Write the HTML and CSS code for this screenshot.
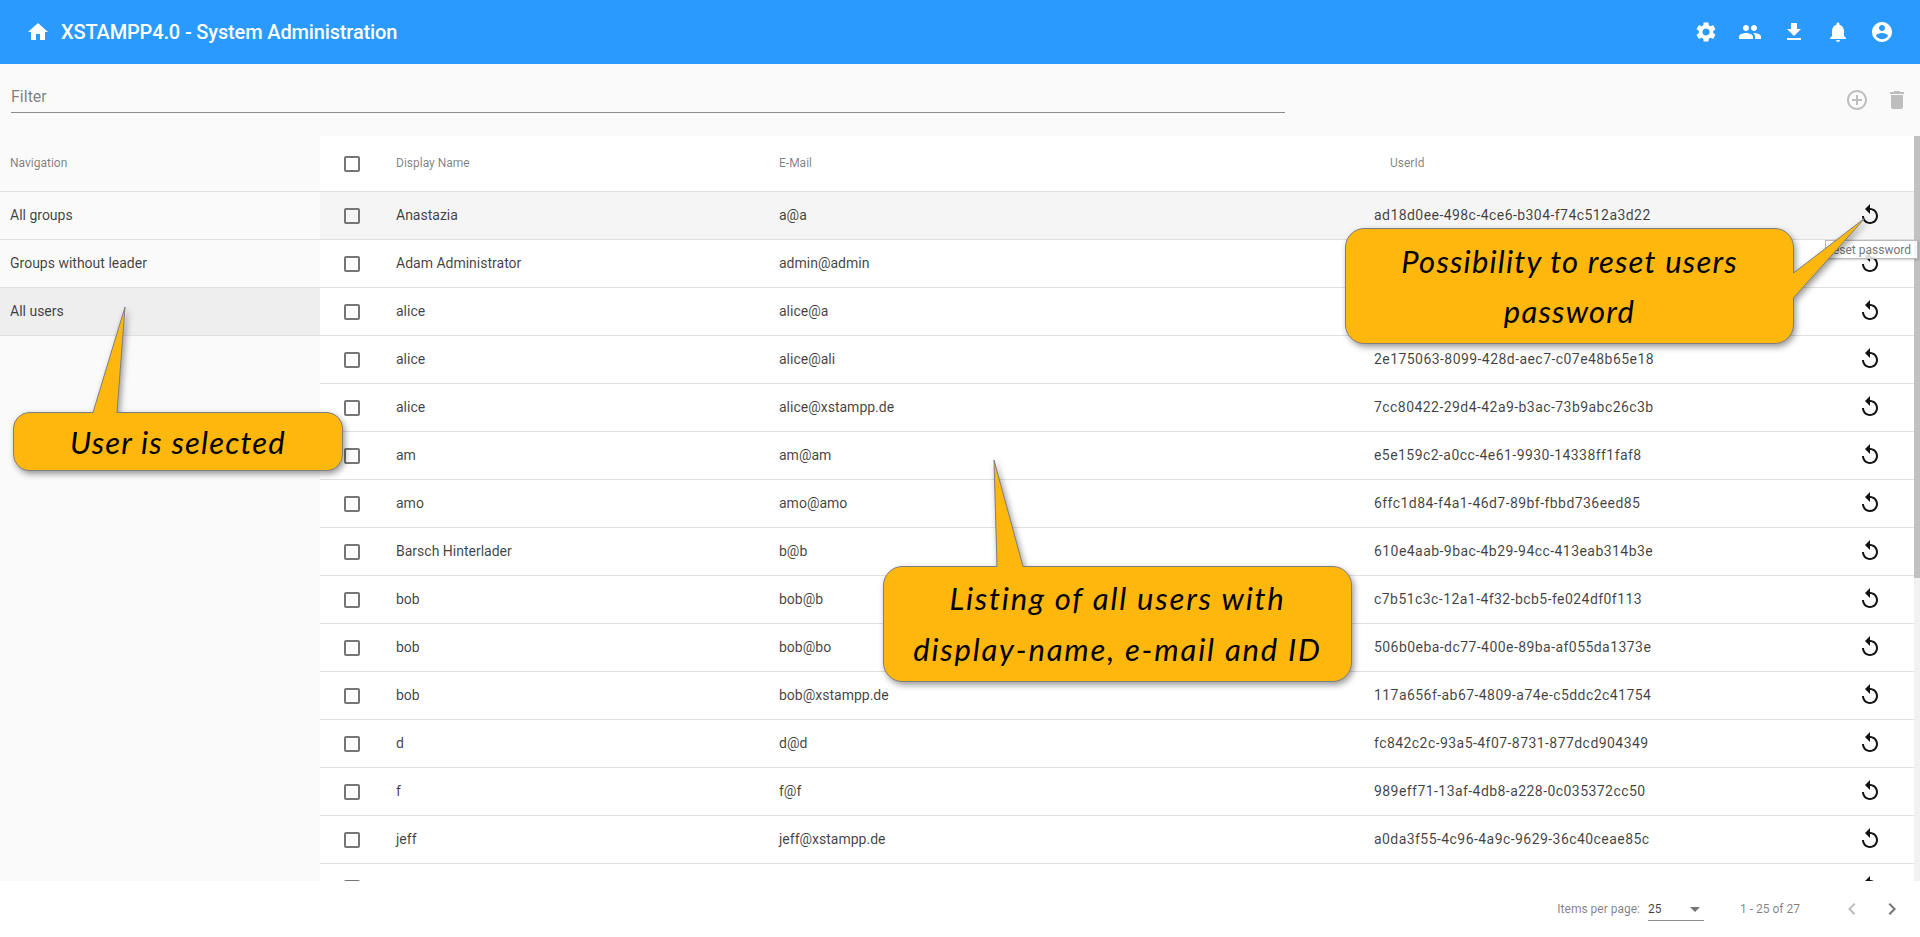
FILE: index.html
```html
<!DOCTYPE html>
<html lang="en">
<head>
    <meta charset="UTF-8">
    <meta name="viewport" content="width=device-width, initial-scale=1.0">
    <title>XSTAMPP4.0 - System Administration</title>
    <link rel="stylesheet" href="styles.css">
</head>
<body>
    <svg class="icon-defs" xmlns="http://www.w3.org/2000/svg">
        <symbol id="i-replay" viewBox="0 0 24 24"><path d="M12 5V1L7 6l5 5V7c3.31 0 6 2.69 6 6s-2.69 6-6 6-6-2.69-6-6H4c0 4.42 3.58 8 8 8s8-3.58 8-8-3.58-8-8-8z"/></symbol>
    </svg>

    <header class="toolbar">
        <svg class="icon" viewBox="0 0 24 24"><path d="M10 20v-6h4v6h5v-8h3L12 3 2 12h3v8z"/></svg>
        <span class="toolbar-title">XSTAMPP4.0 - System Administration</span>
        <div class="toolbar-icons">
            <svg class="icon" viewBox="0 0 24 24"><path d="M19.14 12.94c.04-.3.06-.61.06-.94 0-.32-.02-.64-.07-.94l2.03-1.58c.18-.14.23-.41.12-.61l-1.92-3.32c-.12-.22-.37-.29-.59-.22l-2.39.96c-.5-.38-1.03-.7-1.62-.94l-.36-2.54c-.04-.24-.24-.41-.48-.41h-3.84c-.24 0-.43.17-.47.41l-.36 2.54c-.59.24-1.13.57-1.62.94l-2.39-.96c-.22-.08-.47 0-.59.22L2.74 8.87c-.12.21-.08.47.12.61l2.03 1.58c-.05.3-.09.63-.09.94s.02.64.07.94l-2.03 1.58c-.18.14-.23.41-.12.61l1.92 3.32c.12.22.37.29.59.22l2.39-.96c.5.38 1.03.7 1.62.94l.36 2.54c.05.24.24.41.48.41h3.84c.24 0 .44-.17.47-.41l.36-2.54c.59-.24 1.13-.56 1.62-.94l2.39.96c.22.08.47 0 .59-.22l1.92-3.32c.12-.22.07-.47-.12-.61l-2.01-1.58zM12 15.6c-1.98 0-3.6-1.62-3.6-3.6s1.62-3.6 3.6-3.6 3.6 1.62 3.6 3.6-1.62 3.6-3.6 3.6z"/></svg>
            <svg class="icon" viewBox="0 0 24 24"><path d="M16 11c1.66 0 2.99-1.34 2.99-3S17.66 5 16 5c-1.66 0-3 1.34-3 3s1.34 3 3 3zm-8 0c1.66 0 2.99-1.34 2.99-3S9.66 5 8 5C6.34 5 5 6.34 5 8s1.34 3 3 3zm0 2c-2.33 0-7 1.17-7 3.5V19h14v-2.5c0-2.33-4.67-3.5-7-3.5zm8 0c-.29 0-.62.02-.97.05 1.16.84 1.97 1.97 1.97 3.45V19h6v-2.5c0-2.33-4.67-3.5-7-3.5z"/></svg>
            <svg class="icon" viewBox="0 0 24 24"><path d="M19 9h-4V3H9v6H5l7 7 7-7zM5 18v2h14v-2H5z"/></svg>
            <svg class="icon" viewBox="0 0 24 24"><path d="M12 22c1.1 0 2-.9 2-2h-4c0 1.1.89 2 2 2zm6-6v-5c0-3.07-1.64-5.64-4.5-6.32V4c0-.83-.67-1.5-1.5-1.5s-1.5.67-1.5 1.5v.68C7.63 5.36 6 7.92 6 11v5l-2 2v1h16v-1l-2-2z"/></svg>
            <svg class="icon" viewBox="0 0 24 24"><path d="M12 2C6.48 2 2 6.48 2 12s4.48 10 10 10 10-4.48 10-10S17.52 2 12 2zm0 3c1.66 0 3 1.34 3 3s-1.34 3-3 3-3-1.34-3-3 1.34-3 3-3zm0 14.2c-2.5 0-4.71-1.28-6-3.22.03-1.99 4-3.08 6-3.08 1.99 0 5.97 1.09 6 3.08-1.29 1.94-3.5 3.22-6 3.22z"/></svg>
        </div>
    </header>

    <div class="filter-bar">
        <input class="filter-input" type="text" placeholder="Filter">
        <div class="filter-actions">
            <svg class="icon" viewBox="0 0 24 24"><path d="M13 7h-2v4H7v2h4v4h2v-4h4v-2h-4V7zm-1-5C6.48 2 2 6.48 2 12s4.48 10 10 10 10-4.48 10-10S17.52 2 12 2zm0 18c-4.41 0-8-3.59-8-8s3.59-8 8-8 8 3.59 8 8-3.59 8-8 8z"/></svg>
            <svg class="icon" viewBox="0 0 24 24"><path d="M6 19c0 1.1.9 2 2 2h8c1.1 0 2-.9 2-2V7H6v12zM19 4h-3.5l-1-1h-5l-1 1H5v2h14V4z"/></svg>
        </div>
    </div>

    <main class="main">
        <nav class="sidebar">
            <div class="nav-head">Navigation</div>
            <a class="nav-item" href="#">All groups</a>
            <a class="nav-item" href="#">Groups without leader</a>
            <a class="nav-item selected" href="#">All users</a>
        </nav>

        <section class="user-list">
            <div class="row head">
                <span class="box"></span>
                <span>Display Name</span>
                <span>E-Mail</span>
                <span class="uid-head">UserId</span>
            </div>
            <div class="row hover">
                <span class="box"></span><span>Anastazia</span><span>a@a</span><span class="uid">ad18d0ee-498c-4ce6-b304-f74c512a3d22</span>
                <svg class="icon reset"><use href="#i-replay"/></svg>
            </div>
            <div class="row">
                <span class="box"></span><span>Adam Administrator</span><span>admin@admin</span><span class="uid"></span>
                <svg class="icon reset"><use href="#i-replay"/></svg>
            </div>
            <div class="row">
                <span class="box"></span><span>alice</span><span>alice@a</span><span class="uid"></span>
                <svg class="icon reset"><use href="#i-replay"/></svg>
            </div>
            <div class="row">
                <span class="box"></span><span>alice</span><span>alice@ali</span><span class="uid">2e175063-8099-428d-aec7-c07e48b65e18</span>
                <svg class="icon reset"><use href="#i-replay"/></svg>
            </div>
            <div class="row">
                <span class="box"></span><span>alice</span><span>alice@xstampp.de</span><span class="uid">7cc80422-29d4-42a9-b3ac-73b9abc26c3b</span>
                <svg class="icon reset"><use href="#i-replay"/></svg>
            </div>
            <div class="row">
                <span class="box"></span><span>am</span><span>am@am</span><span class="uid">e5e159c2-a0cc-4e61-9930-14338ff1faf8</span>
                <svg class="icon reset"><use href="#i-replay"/></svg>
            </div>
            <div class="row">
                <span class="box"></span><span>amo</span><span>amo@amo</span><span class="uid">6ffc1d84-f4a1-46d7-89bf-fbbd736eed85</span>
                <svg class="icon reset"><use href="#i-replay"/></svg>
            </div>
            <div class="row">
                <span class="box"></span><span>Barsch Hinterlader</span><span>b@b</span><span class="uid">610e4aab-9bac-4b29-94cc-413eab314b3e</span>
                <svg class="icon reset"><use href="#i-replay"/></svg>
            </div>
            <div class="row">
                <span class="box"></span><span>bob</span><span>bob@b</span><span class="uid">c7b51c3c-12a1-4f32-bcb5-fe024df0f113</span>
                <svg class="icon reset"><use href="#i-replay"/></svg>
            </div>
            <div class="row">
                <span class="box"></span><span>bob</span><span>bob@bo</span><span class="uid">506b0eba-dc77-400e-89ba-af055da1373e</span>
                <svg class="icon reset"><use href="#i-replay"/></svg>
            </div>
            <div class="row">
                <span class="box"></span><span>bob</span><span>bob@xstampp.de</span><span class="uid">117a656f-ab67-4809-a74e-c5ddc2c41754</span>
                <svg class="icon reset"><use href="#i-replay"/></svg>
            </div>
            <div class="row">
                <span class="box"></span><span>d</span><span>d@d</span><span class="uid">fc842c2c-93a5-4f07-8731-877dcd904349</span>
                <svg class="icon reset"><use href="#i-replay"/></svg>
            </div>
            <div class="row">
                <span class="box"></span><span>f</span><span>f@f</span><span class="uid">989eff71-13af-4db8-a228-0c035372cc50</span>
                <svg class="icon reset"><use href="#i-replay"/></svg>
            </div>
            <div class="row">
                <span class="box"></span><span>jeff</span><span>jeff@xstampp.de</span><span class="uid">a0da3f55-4c96-4a9c-9629-36c40ceae85c</span>
                <svg class="icon reset"><use href="#i-replay"/></svg>
            </div>
            <div class="row">
                <span class="box"></span><span></span><span></span><span></span>
                <svg class="icon reset"><use href="#i-replay"/></svg>
            </div>
        </section>

        <div class="scrollbar"><div class="scrollbar-thumb"></div></div>
    </main>

    <footer class="paginator">
        <span>Items per page:</span>
        <div class="page-select"><span class="page-value">25</span><span class="page-arrow"></span></div>
        <span class="page-range">1 - 25 of 27</span>
        <svg class="icon page-prev" viewBox="0 0 24 24"><path d="M15.41 7.41L14 6l-6 6 6 6 1.41-1.41L10.83 12z"/></svg>
        <svg class="icon page-next" viewBox="0 0 24 24"><path d="M10 6L8.59 7.41 13.17 12l-4.58 4.59L10 18l6-6z"/></svg>
    </footer>

    <div class="tooltip">reset password</div>

    <!-- annotations drawn on top of the screenshot -->
    <div class="callout callout-reset">
        <svg class="callout-shape"><path d="M19 .5H430A19 19 0 0 1 448.5 19V45L520 -10 448.5 70V97A19 19 0 0 1 430 115.5H19A19 19 0 0 1 .5 97V19A19 19 0 0 1 19 .5z"/></svg>
        <p>Possibility to reset users<br>password</p>
    </div>
    <div class="callout callout-selected">
        <svg class="callout-shape"><path d="M16 .5H80L112 -105 104 .5H314A16 16 0 0 1 329.5 16V42A16 16 0 0 1 314 58.5H16A16 16 0 0 1 .5 42V16A16 16 0 0 1 16 .5z"/></svg>
        <p>User is selected</p>
    </div>
    <div class="callout callout-listing">
        <svg class="callout-shape"><path d="M19 .5H114L111 -106 140 .5H450A19 19 0 0 1 468.5 19V97A19 19 0 0 1 450 115.5H19A19 19 0 0 1 .5 97V19A19 19 0 0 1 19 .5z"/></svg>
        <p>Listing of all users with<br>display-name, e-mail and ID</p>
    </div>
</body>
</html>
```

FILE: styles.css
```css
body {
    font-family: Roboto, "Liberation Sans", sans-serif;
    margin: 0;
    height: 100vh;
    overflow: hidden;
    display: flex;
    flex-direction: column;
    background-color: #fff;
    color: rgba(0, 0, 0, 0.75);
}

.icon-defs {
    display: none;
}

.icon {
    width: 24px;
    height: 24px;
    flex: none;
    fill: currentColor;
}

.toolbar {
    height: 64px;
    flex: none;
    display: flex;
    align-items: center;
    padding: 0 26px;
    background-color: #2a9afe;
    color: #fff;
}

.toolbar-title {
    margin-left: 11px;
    font-size: 20px;
    font-weight: 500;
    letter-spacing: -0.15px;
}

.toolbar-icons {
    margin-left: auto;
    display: flex;
    gap: 20px;
}

.filter-bar {
    height: 72px;
    flex: none;
    display: flex;
    padding: 0 11px;
    background-color: #fafafa;
}

.filter-input {
    width: 1274px;
    height: 27px;
    box-sizing: border-box;
    margin-top: 22px;
    padding: 0 0 6px;
    border: none;
    border-bottom: 1px solid #8c8c8c;
    background: transparent;
    font-family: inherit;
    font-size: 16px;
    line-height: 20px;
}

.filter-input::placeholder {
    color: rgba(0, 0, 0, 0.5);
    opacity: 1;
}

.filter-actions {
    margin-left: auto;
    margin-top: 24px;
    display: flex;
    gap: 16px;
    color: #bdbdbd;
}

.main {
    flex: 1;
    min-height: 0;
    display: flex;
}

.sidebar {
    width: 320px;
    flex: none;
    background-color: #fafafa;
}

.nav-head,
.nav-item {
    display: flex;
    align-items: center;
    box-sizing: border-box;
    padding: 0 0 2px 10px;
    border-bottom: 1px solid #e0e0e0;
}

.nav-head {
    height: 56px;
    font-size: 12px;
    color: rgba(0, 0, 0, 0.5);
}

.nav-item {
    height: 48px;
    font-size: 14px;
    color: rgba(0, 0, 0, 0.75);
    text-decoration: none;
}

.nav-item.selected {
    background-color: #eee;
}

.user-list {
    flex: 1;
    min-width: 0;
    overflow: hidden;
}

.row {
    display: grid;
    grid-template-columns: 76px 383px 595px 1fr 88px;
    align-items: center;
    height: 48px;
    box-sizing: border-box;
    border-bottom: 1px solid #e0e0e0;
    font-size: 14px;
}

/* text sits a pixel above the checkbox centre */
.row span:not(.box) {
    margin-bottom: 2px;
}

.row.head {
    height: 56px;
    font-size: 12px;
    color: rgba(0, 0, 0, 0.5);
}

.row.hover {
    background-color: #f5f5f5;
}

.uid {
    letter-spacing: 0.44px;
}

.uid-head {
    margin-left: 16px;
}

.box {
    width: 16px;
    height: 16px;
    box-sizing: border-box;
    margin-left: 24px;
    border: 2px solid #757575;
    border-radius: 2px;
}

.reset {
    justify-self: center;
    margin-bottom: 1px;
    color: #111;
}

.scrollbar {
    width: 6px;
    flex: none;
    background-color: #f1f1f1;
}

.scrollbar-thumb {
    height: 442px;
    background-color: #c1c1c1;
}

.paginator {
    height: 56px;
    flex: none;
    display: flex;
    align-items: center;
    justify-content: flex-end;
    padding-right: 16px;
    font-size: 12px;
    color: rgba(0, 0, 0, 0.5);
}

.page-select {
    width: 56px;
    box-sizing: border-box;
    margin-left: 8px;
    padding: 4px 4px 3px 0;
    display: flex;
    align-items: center;
    justify-content: space-between;
    border-bottom: 1px solid #8c8c8c;
    line-height: 16px;
}

.page-value {
    color: rgba(0, 0, 0, 0.75);
}

.page-arrow {
    border-left: 5px solid transparent;
    border-right: 5px solid transparent;
    border-top: 5px solid #757575;
}

.page-range {
    margin: 0 40px 0 36px;
}

.page-prev {
    color: #bdbdbd;
}

.page-next {
    margin-left: 16px;
    color: #757575;
}

.tooltip {
    position: absolute;
    left: 1825px;
    top: 240px;
    width: 93px;
    height: 19px;
    box-sizing: border-box;
    padding-right: 6px;
    border: 1px solid #bbb;
    background-color: rgba(255, 255, 255, 0.85);
    box-shadow: 1px 1px 2px rgba(0, 0, 0, 0.2);
    font-size: 12px;
    line-height: 18px;
    text-align: right;
    color: #777;
}

.callout {
    position: absolute;
    display: flex;
    align-items: center;
    justify-content: center;
    text-align: center;
    color: #000;
}

.callout p {
    position: relative;
    margin: 0;
    font-family: Lato, "Open Sans", sans-serif;
    font-style: italic;
    font-size: 31px;
    letter-spacing: 1.2px;
    line-height: 50px;
}

.callout-shape {
    position: absolute;
    left: 0;
    top: 0;
    width: 100%;
    height: 100%;
    overflow: visible;
    filter: drop-shadow(2px 3px 3px rgba(0, 0, 0, 0.4));
}

.callout-shape path {
    fill: #fdb70d;
    stroke: #7f7f7f;
    stroke-width: 1;
}

.callout-reset {
    left: 1345px;
    top: 228px;
    width: 449px;
    height: 116px;
}

.callout-selected {
    left: 13px;
    top: 412px;
    width: 330px;
    height: 59px;
}

.callout-listing {
    left: 883px;
    top: 566px;
    width: 469px;
    height: 116px;
}

.callout-listing p {
    letter-spacing: 1.8px;
    line-height: 51px;
}
```
